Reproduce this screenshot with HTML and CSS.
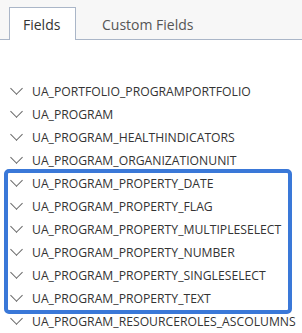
FILE: index.html
```html
<!DOCTYPE html>
<html lang="en">
<head>
	<meta charset="UTF-8">
	<title>Fields</title>
	<link rel="stylesheet" href="styles.css">
</head>
<body>
	<div class="tabs">
		<div class="tab active">Fields</div>
		<div class="tab">Custom Fields</div>
	</div>
	<ul class="tree">
		<li class="row"><span class="chev"></span>UA_PORTFOLIO_PROGRAMPORTFOLIO</li>
		<li class="row"><span class="chev"></span>UA_PROGRAM</li>
		<li class="row"><span class="chev"></span>UA_PROGRAM_HEALTHINDICATORS</li>
		<li class="row"><span class="chev"></span>UA_PROGRAM_ORGANIZATIONUNIT</li>
		<li class="group">
			<ul>
				<li class="row"><span class="chev"></span>UA_PROGRAM_PROPERTY_DATE</li>
				<li class="row"><span class="chev"></span>UA_PROGRAM_PROPERTY_FLAG</li>
				<li class="row"><span class="chev"></span>UA_PROGRAM_PROPERTY_MULTIPLESELECT</li>
				<li class="row"><span class="chev"></span>UA_PROGRAM_PROPERTY_NUMBER</li>
				<li class="row"><span class="chev"></span>UA_PROGRAM_PROPERTY_SINGLESELECT</li>
				<li class="row"><span class="chev"></span>UA_PROGRAM_PROPERTY_TEXT</li>
			</ul>
		</li>
		<li class="row"><span class="chev"></span>UA_PROGRAM_RESOURCEROLES_ASCOLUMNS</li>
	</ul>
</body>
</html>
```

FILE: styles.css
```css
body{
	margin: 0;
	background: #fff;
	font-family: "Open Sans", "Liberation Sans", sans-serif;
	color: #333;
	overflow: hidden;
}
.tabs{
	display: flex;
	align-items: flex-end;
	height: 39px;
	padding-left: 9px;
	background: #f7f7f7;
	border-bottom: 1px solid #aab6c8;
}
.tab{
	height: 33px;
	box-sizing: border-box;
	padding-top: 4px;
	line-height: 26px;
	font-size: 14px;
	color: #555;
	margin-bottom: -1px;
	border: 1px solid transparent;
	border-bottom: none;
}
.tab.active{
	width: 67px;
	padding-left: 13px;
	margin-right: 25px;
	background: #fff;
	color: #333;
	border-color: #aab6c8;
}
.tree,
.tree ul{
	list-style: none;
	margin: 0;
	padding: 0;
}
.tree{
	padding: 40px 0 0 8px;
	width: 280px;
}
.row{
	display: flex;
	align-items: center;
	height: 23px;
	font-size: 12.2px;
	white-space: nowrap;
}
.chev{
	width: 8px;
	height: 8px;
	margin: -6px 11px 0 4px;
	border-right: 1px solid #666;
	border-bottom: 1px solid #666;
	transform: rotate(45deg);
	flex: none;
}
.group{
	margin: -3px -4px -4px -4px;
	border: 4px solid #3a78d8;
	border-radius: 5px;
}
.group ul{
	margin: -1px 0 0 0;
}
```
